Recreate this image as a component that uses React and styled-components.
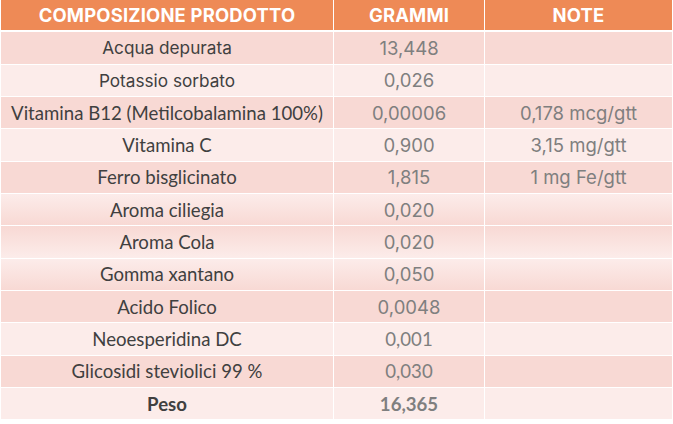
import React from 'react';
import styled, { createGlobalStyle, css } from 'styled-components';

const GlobalStyle = createGlobalStyle`
  html, body {
    margin: 0;
    padding: 0;
    background: #ffffff;
  }
  body {
    font-family: Inter, "Liberation Sans", sans-serif;
  }
`;

const DARK = '#f8d9d4';
const LIGHT = '#fcecea';

const Table = styled.div`
  display: grid;
  grid-template-columns: 332px 150px 187px;
  grid-auto-rows: 31.33px;
  column-gap: 1px;
  row-gap: 1px;
  width: 671px;
  margin-left: 1px;
  background: #ffffff;
`;

const HeadCell = styled.div`
  height: 30px;
  margin-bottom: 2px;
  background: #ee8a56;
  color: #ffffff;
  font-family: Inter, "Liberation Sans", sans-serif;
  font-weight: 700;
  font-size: 18.4px;
  letter-spacing: 0.2px;
  display: flex;
  align-items: center;
  justify-content: center;
`;

const shades = {
  dark: css`background: ${DARK};`,
  light: css`background: ${LIGHT};`,
  up: css`background: linear-gradient(to bottom, ${LIGHT}, ${DARK});`,
  down: css`background: linear-gradient(to bottom, ${DARK}, ${LIGHT});`,
};

const Cell = styled.div`
  ${(p) => shades[p.$shade]}
  display: flex;
  align-items: center;
  justify-content: center;
  white-space: nowrap;
  font-family: ${(p) => (p.$calibri ? 'Lato, "Liberation Sans", sans-serif' : 'Inter, "Liberation Sans", sans-serif')};
  font-size: ${(p) => p.$size || (p.$calibri ? '18.6px' : '18.5px')};
  font-weight: ${(p) => (p.$bold ? 700 : 400)};
  color: ${(p) => (p.$muted ? '#7f7f7f' : '#404040')};
`;

const rows = [
  { name: 'Acqua depurata', g: '13,448', shade: 'dark', nameAptos: true },
  { name: 'Potassio sorbato', g: '0,026', shade: 'light', nameAptos: true },
  { name: 'Vitamina B12 (Metilcobalamina 100%)', g: '0,00006', note: '0,178 mcg/gtt', shade: 'dark' },
  { name: 'Vitamina C', g: '0,900', note: '3,15 mg/gtt', shade: 'light' },
  { name: 'Ferro bisglicinato', g: '1,815', note: '1 mg Fe/gtt', shade: 'dark' },
  { name: 'Aroma ciliegia', g: '0,020', shade: 'up' },
  { name: 'Aroma Cola', g: '0,020', shade: 'down' },
  { name: 'Gomma xantano', g: '0,050', shade: 'up' },
  { name: 'Acido Folico', g: '0,0048', shade: 'dark' },
  { name: 'Neoesperidina DC', g: '0,001', shade: 'light', gCalibri: true },
  { name: 'Glicosidi steviolici 99 %', g: '0,030', shade: 'dark', gCalibri: true },
  { name: 'Peso', g: '16,365', shade: 'light', gCalibri: true, bold: true },
];

export default function App() {
  return (
    <>
      <GlobalStyle />
      <Table>
        <HeadCell>COMPOSIZIONE PRODOTTO</HeadCell>
        <HeadCell>GRAMMI</HeadCell>
        <HeadCell>NOTE</HeadCell>
        {rows.map((r) => (
          <React.Fragment key={r.name}>
            <Cell
              $shade={r.shade}
              $calibri={!r.nameAptos}
              $size={r.nameAptos ? '17.2px' : undefined}
              $bold={r.bold}
            >
              {r.name}
            </Cell>
            <Cell $shade={r.shade} $calibri={r.gCalibri} $bold={r.bold} $muted>
              {r.g}
            </Cell>
            <Cell $shade={r.shade} $muted>
              {r.note}
            </Cell>
          </React.Fragment>
        ))}
      </Table>
    </>
  );
}
